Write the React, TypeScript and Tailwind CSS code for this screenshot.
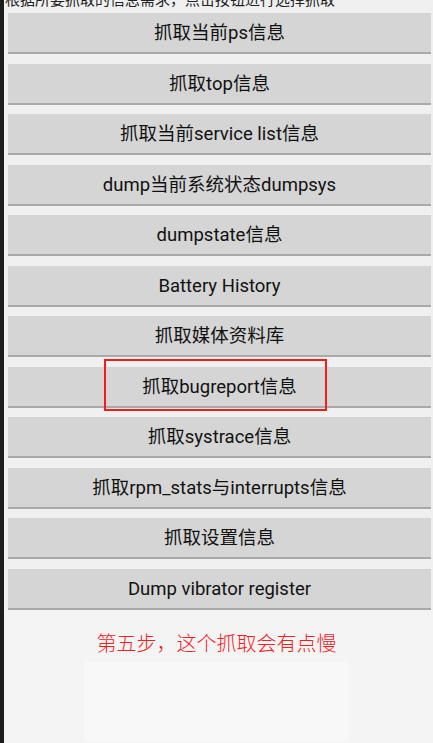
const buttons = [
  "抓取当前ps信息",
  "抓取top信息",
  "抓取当前service list信息",
  "dump当前系统状态dumpsys",
  "dumpstate信息",
  "Battery History",
  "抓取媒体资料库",
  "抓取bugreport信息",
  "抓取systrace信息",
  "抓取rpm_stats与interrupts信息",
  "抓取设置信息",
  "Dump vibrator register",
]

export default function App() {
  return (
    <div className="flex h-[743px] w-[433px] overflow-hidden bg-[#f0f0f0] font-['Roboto','Noto_Sans_CJK_SC',sans-serif]">
      <div className="w-[4px] shrink-0 bg-[#1c1c1c]" />
      <div className="flex flex-1 flex-col">
        <p className="-mt-[9px] h-[18px] pl-[1px] text-[15px] leading-[18px] text-[#222]">
          根据所要抓取的信息需求，点击按钮进行选择抓取
        </p>
        <div className="mt-[4px] flex flex-col gap-[9.5px] pl-[4px] pr-[2px]">
          {buttons.map((label, i) => (
            <div key={i} className="relative">
              <div className="flex h-[41px] items-center justify-center border-b-2 border-[#a9a9a9] bg-[#d5d5d5] pt-[3px] text-[18.5px] text-[#111]">
                {label}
              </div>
              {i === 7 && (
                <div className="absolute -top-[8px] left-[96px] h-[52px] w-[223px] border-2 border-[#f21c1c]" />
              )}
            </div>
          ))}
        </div>
        <div className="flex flex-1 flex-col items-center bg-[#f4f4f4] pr-[4px]">
          <p className="mt-[21px] text-center text-[20px] font-light leading-[26px] text-[#f42020]">
            第五步，这个抓取会有点慢
          </p>
          <div className="mt-[4px] h-[80px] w-[265px] bg-[#f8f8f8]" />
        </div>
      </div>
    </div>
  )
}
